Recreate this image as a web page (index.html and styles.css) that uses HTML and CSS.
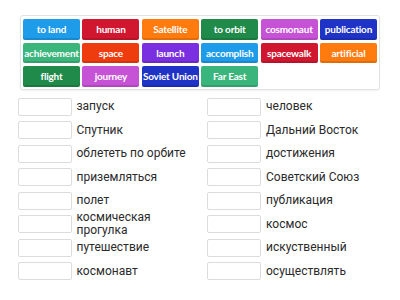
FILE: index.html
```html
<!DOCTYPE html>
<html>
<head>
<meta charset="utf-8">
<link rel="stylesheet" href="styles.css">
</head>
<body>
<div class="page">
  <div class="bank">
    <div class="tile c-blue">to land</div>
    <div class="tile c-red">human</div>
    <div class="tile c-orange">Satellite</div>
    <div class="tile c-dgreen">to orbit</div>
    <div class="tile c-orchid">cosmonaut</div>
    <div class="tile c-dblue">publication</div>
    <div class="tile c-green">achievement</div>
    <div class="tile c-redorange">space</div>
    <div class="tile c-purple">launch</div>
    <div class="tile c-blue">accomplish</div>
    <div class="tile c-red">spacewalk</div>
    <div class="tile c-orange">artificial</div>
    <div class="tile c-dgreen">flight</div>
    <div class="tile c-orchid">journey</div>
    <div class="tile c-dblue">Soviet Union</div>
    <div class="tile c-green">Far East</div>
  </div>
  <div class="targets">
    <div class="col">
      <div class="row"><div class="box"></div><div class="label">запуск</div></div>
      <div class="row"><div class="box"></div><div class="label">Спутник</div></div>
      <div class="row"><div class="box"></div><div class="label">облететь по орбите</div></div>
      <div class="row"><div class="box"></div><div class="label">приземляться</div></div>
      <div class="row"><div class="box"></div><div class="label">полет</div></div>
      <div class="row"><div class="box"></div><div class="label">космическая прогулка</div></div>
      <div class="row"><div class="box"></div><div class="label">путешествие</div></div>
      <div class="row"><div class="box"></div><div class="label">космонавт</div></div>
    </div>
    <div class="col">
      <div class="row"><div class="box"></div><div class="label">человек</div></div>
      <div class="row"><div class="box"></div><div class="label">Дальний Восток</div></div>
      <div class="row"><div class="box"></div><div class="label">достижения</div></div>
      <div class="row"><div class="box"></div><div class="label">Советский Союз</div></div>
      <div class="row"><div class="box"></div><div class="label">публикация</div></div>
      <div class="row"><div class="box"></div><div class="label">космос</div></div>
      <div class="row"><div class="box"></div><div class="label">искуственный</div></div>
      <div class="row"><div class="box"></div><div class="label">осуществлять</div></div>
    </div>
  </div>
</div>
</body>
</html>
```
FILE: styles.css
```css
html, body {
  margin: 0;
  padding: 0;
  background: #ffffff;
}
.page {
  width: 400px;
  height: 300px;
  overflow: hidden;
  padding-top: 15px;
  box-sizing: border-box;
}
.bank {
  margin-left: 20px;
  width: 360px;
  box-sizing: border-box;
  border: 1px solid #e2e2e2;
  border-radius: 3px;
  padding: 3px 2px 2px 2px;
  display: grid;
  grid-template-columns: repeat(6, 57px);
  grid-auto-rows: 20.5px;
  column-gap: 2.4px;
  row-gap: 3px;
  box-shadow: 0 1px 2px rgba(0,0,0,0.06);
}
.tile {
  border-radius: 2px;
  color: #ffffff;
  font-family: Lato, "Open Sans", sans-serif;
  font-weight: 700;
  font-size: 10px;
  letter-spacing: -0.2px;
  display: flex;
  align-items: center;
  justify-content: center;
  white-space: nowrap;
  overflow: hidden;
  box-shadow: inset 0 -2px 0 rgba(0,0,0,0.12);
}
.c-blue { background: #1e9be9; }
.c-red { background: #d0172f; }
.c-orange { background: #ff7b0d; }
.c-dgreen { background: #1f8a49; }
.c-orchid { background: #c653d6; }
.c-dblue { background: #2033c7; }
.c-green { background: #3ab57b; }
.c-redorange { background: #ef3c0e; }
.c-purple { background: #7a2fe0; }

.targets {
  display: grid;
  grid-template-columns: 189.5px 1fr;
  padding-left: 17.5px;
  margin-top: 5.5px;
}
.col {
  display: grid;
  grid-auto-rows: 23.5px;
}
.row {
  display: flex;
  align-items: center;
  gap: 5px;
}
.box {
  flex: 0 0 auto;
  width: 54px;
  height: 18px;
  box-sizing: border-box;
  border: 1px solid #dcdcdc;
  border-radius: 2px;
  background: #fff;
}
.label {
  font-family: Roboto, "Noto Sans", sans-serif;
  font-size: 12px;
  line-height: 13px;
  color: #2a2a2a;
  width: 114px;
}
```
